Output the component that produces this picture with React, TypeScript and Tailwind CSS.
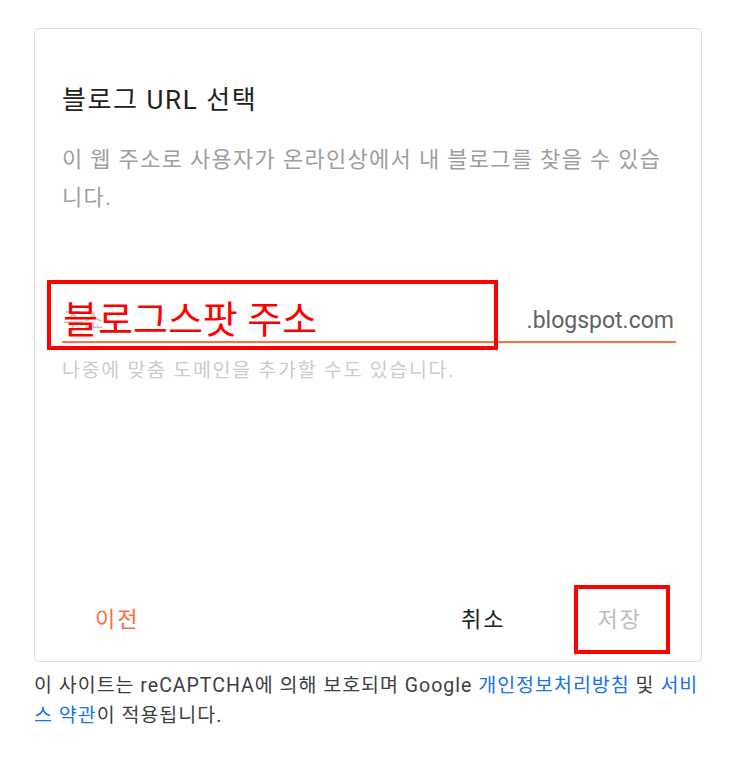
import React from 'react';

const font = { fontFamily: 'Roboto, "Noto Sans CJK KR", sans-serif' };

export default function App() {
  return (
    <div className="w-[738px] h-[769px] bg-white" style={font}>
      <div className="ml-[34px] w-[668px] pt-[28px]">
        {/* Dialog card */}
        <div className="relative h-[634px] flex flex-col border border-[#dadce0] rounded-[5px] bg-white">
          <div className="pl-[27px] pr-[25px] pt-[53px]">
            <h1 className="text-[26px] leading-[36px] tracking-[1.6px] text-[#212121]">블로그 URL 선택</h1>
            <p className="mt-[23px] text-[22px] leading-[38px] tracking-[1.3px] text-[#9e9e9e]">
              이 웹 주소로 사용자가 온라인상에서 내 블로그를 찾을 수 있습니다.
            </p>

            {/* Address input */}
            <div className="mt-[89px] flex items-end border-b-2 border-[#ff7043] pb-[5px]">
              <span className="flex-1 pl-[1px] text-[22px] leading-[30px] text-[#c4c4c4]">주소</span>
              <span className="mr-[2px] text-[23px] leading-[30px] text-[#5f6368]">.blogspot.com</span>
            </div>
            <p className="mt-[14px] text-[19.5px] leading-[28px] tracking-[1.7px] text-[#cccccc]">
              나중에 맞춤 도메인을 추가할 수도 있습니다.
            </p>
          </div>

          {/* Actions */}
          <div className="mt-auto pb-[27px] flex items-center">
            <button className="ml-[60px] text-[22px] leading-[28px] tracking-[2px] text-[#ff6e40]">이전</button>
            <button className="ml-auto text-[22px] leading-[28px] tracking-[2px] text-[#212121]">취소</button>
            <button className="ml-[92px] mr-[59px] text-[22px] leading-[28px] tracking-[2px] text-[#bdbdbd]">저장</button>
          </div>

          {/* Annotation overlays */}
          <div className="absolute left-[12px] top-[251px] w-[451px] h-[70px] border-4 border-[#ff0000]" />
          <div className="absolute left-[28px] top-[271px] text-[38px] leading-[40px] text-[#ff0000]">블로그스팟 주소</div>
          <div className="absolute left-[539px] top-[556px] w-[96px] h-[69px] border-4 border-[#ff0000]" />
        </div>

        <p className="mt-[9px] text-[19.5px] leading-[30px] tracking-[1px] text-[#3c4043]">
          이 사이트는 reCAPTCHA에 의해 보호되며 Google{' '}
          <a className="text-[#1a73e8]">개인정보처리방침</a> 및{' '}
          <a className="text-[#1a73e8]">서비스 약관</a>이 적용됩니다.
        </p>
      </div>
    </div>
  );
}
